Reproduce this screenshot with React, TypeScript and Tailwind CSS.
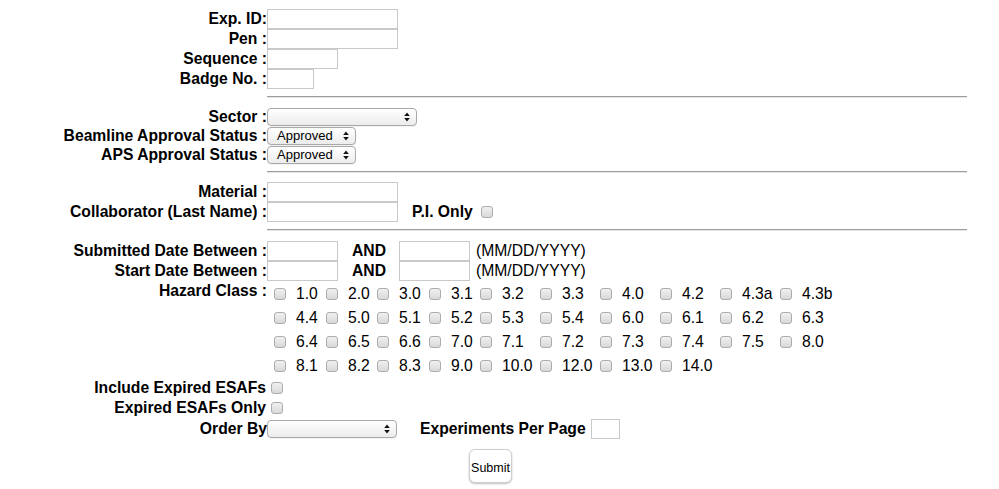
import React from "react";

const Box = ({ w }: { w: string }) => (
  <div className={`${w} h-[20px] border border-[#c9c9c9] bg-white box-border`} />
);

const Arrows = () => (
  <svg width="6" height="10" viewBox="0 0 6 10" className="shrink-0">
    <path d="M3 0.5 L5.8 4 L0.2 4 Z" fill="#111" />
    <path d="M3 9.5 L5.8 6 L0.2 6 Z" fill="#111" />
  </svg>
);

const Select = ({ w, text }: { w: string; text?: string }) => (
  <div
    className={`${w} h-[18px] box-border rounded-[4px] border border-[#a9a9a9] bg-gradient-to-b from-[#ffffff] to-[#ececec] flex items-center justify-between pl-[9px] pr-[6px] shadow-[0_1px_0_rgba(0,0,0,0.05)]`}
  >
    <span className="text-[13px] leading-none text-black">{text ?? ""}</span>
    <Arrows />
  </div>
);

const Check = ({ cls = "" }: { cls?: string }) => (
  <span
    className={`inline-block w-[12px] h-[12px] box-border rounded-[3px] border border-[#acacac] bg-gradient-to-b from-[#f0f0f0] to-[#d9d9d9] shrink-0 ${cls}`}
  />
);

const Label = ({ children }: { children: React.ReactNode }) => (
  <div className="w-[267px] shrink-0 text-right font-bold whitespace-pre">{children}</div>
);

const Hr = ({ mt }: { mt: string }) => (
  <div className={`${mt} ml-[267px] w-[700px] h-[2px] border-t border-[#9d9d9d] border-b border-b-[#e6e6e6] box-border`} />
);

const hazard: string[][] = [
  ["1.0", "2.0", "3.0", "3.1", "3.2", "3.3", "4.0", "4.2", "4.3a", "4.3b"],
  ["4.4", "5.0", "5.1", "5.2", "5.3", "5.4", "6.0", "6.1", "6.2", "6.3"],
  ["6.4", "6.5", "6.6", "7.0", "7.1", "7.2", "7.3", "7.4", "7.5", "8.0"],
  ["8.1", "8.2", "8.3", "9.0", "10.0", "12.0", "13.0", "14.0"],
];

export default function App() {
  return (
    <div className="w-[999px] h-[489px] bg-white text-black font-['Liberation_Sans',Arial,sans-serif] text-[15.7px] leading-[18px] pt-[9px]">
      {/* Block 1 */}
      <div className="flex h-[20px] items-center">
        <Label>Exp. ID:</Label>
        <Box w="w-[131px]" />
      </div>
      <div className="flex h-[20px] items-center">
        <Label>Pen :</Label>
        <Box w="w-[131px]" />
      </div>
      <div className="flex h-[20px] items-center">
        <Label>Sequence :</Label>
        <Box w="w-[71px]" />
      </div>
      <div className="flex h-[20px] items-center">
        <Label>Badge No. :</Label>
        <Box w="w-[47px]" />
      </div>

      <Hr mt="mt-[7px]" />

      {/* Block 2 */}
      <div className="mt-[9px]">
        <div className="flex h-[19px] items-center">
          <Label>Sector :</Label>
          <Select w="w-[150px]" />
        </div>
        <div className="flex h-[19px] items-center">
          <Label>Beamline Approval Status :</Label>
          <Select w="w-[89px]" text="Approved" />
        </div>
        <div className="flex h-[19px] items-center">
          <Label>APS Approval Status :</Label>
          <Select w="w-[89px]" text="Approved" />
        </div>
      </div>

      <Hr mt="mt-[7px]" />

      {/* Block 3 */}
      <div className="mt-[9px]">
        <div className="flex h-[20px] items-center">
          <Label>Material :</Label>
          <Box w="w-[131px]" />
        </div>
        <div className="flex h-[20px] items-center">
          <Label>Collaborator (Last Name) :</Label>
          <Box w="w-[131px]" />
          <span className="ml-[14px] font-bold">P.I. Only</span>
          <Check cls="ml-[8px]" />
        </div>
      </div>

      <Hr mt="mt-[7px]" />

      {/* Block 4 */}
      <div className="mt-[10px]">
        <div className="flex h-[20px] items-center">
          <Label>Submitted Date Between :</Label>
          <Box w="w-[71px]" />
          <span className="ml-[14px] font-bold">AND</span>
          <div className="ml-[13px]">
            <Box w="w-[71px]" />
          </div>
          <span className="ml-[6px]">(MM/DD/YYYY)</span>
        </div>
        <div className="flex h-[20px] items-center">
          <Label>Start Date Between :</Label>
          <Box w="w-[71px]" />
          <span className="ml-[14px] font-bold">AND</span>
          <div className="ml-[13px]">
            <Box w="w-[71px]" />
          </div>
          <span className="ml-[6px]">(MM/DD/YYYY)</span>
        </div>

        <div className="flex items-start">
          <div className="w-[267px] shrink-0 text-right font-bold h-[20px] flex items-center justify-end">
            Hazard Class :
          </div>
          <div className="grid grid-cols-[52px_51px_52px_51px_60px_60px_60px_60px_60px_60px] pt-[1px]">
            {hazard.map((row, ri) =>
              row.map((h, ci) => (
                <div key={`${ri}-${ci}`} className="h-[24px] flex items-center pl-[7px] whitespace-nowrap">
                  <Check />
                  <span className="ml-[10px]">{h}</span>
                </div>
              ))
            )}
          </div>
        </div>
      </div>

      {/* Block 5 */}
      <div className="flex h-[20px] items-center">
        <div className="w-[266px] shrink-0 text-right font-bold">Include Expired ESAFs</div>
        <Check cls="ml-[5px]" />
      </div>
      <div className="flex h-[20px] items-center">
        <div className="w-[266px] shrink-0 text-right font-bold">Expired ESAFs Only</div>
        <Check cls="ml-[5px]" />
      </div>
      <div className="flex h-[20px] items-center mt-[1px]">
        <div className="w-[267px] shrink-0 text-right font-bold">Order By</div>
        <Select w="w-[130px]" />
        <span className="ml-[23px] font-bold">Experiments Per Page</span>
        <div className="ml-[5px]">
          <Box w="w-[29px]" />
        </div>
      </div>

      <div className="mt-[10px] ml-[469px]">
        <button className="w-[43px] h-[34px] rounded-[6px] border border-[#cfcfcf] bg-white shadow-[0_1px_2px_rgba(0,0,0,0.25)] text-[12.5px] text-black font-['Liberation_Sans',Arial,sans-serif] p-0 pt-[3px] flex items-center justify-center">
          Submit
        </button>
      </div>
    </div>
  );
}
